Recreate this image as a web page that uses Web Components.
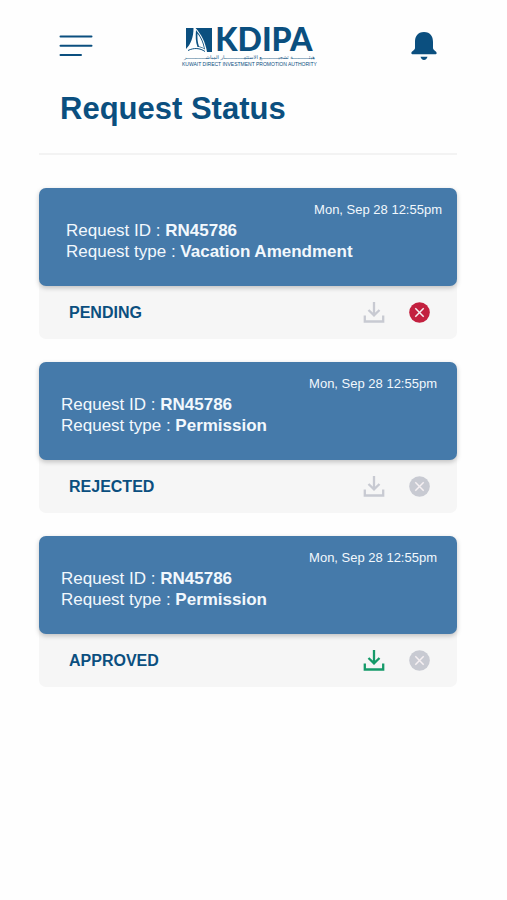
<!DOCTYPE html>
<html lang="en">
<head>
<meta charset="UTF-8">
<meta name="viewport" content="width=device-width, initial-scale=1.0">
<title>Request Status</title>
<style>
  body {
    margin: 0;
    background: #fefefe;
    color: #0b4f7f;
    font-family: "Liberation Sans", Arial, sans-serif;
  }
</style>
</head>
<body>
<request-page heading="Request Status">
  <app-header slot="header">
    <kdipa-logo></kdipa-logo>
  </app-header>
  <request-card class="inset" request-id="RN45786" type="Vacation Amendment" date="Mon, Sep 28 12:55pm" status="PENDING"></request-card>
  <request-card request-id="RN45786" type="Permission" date="Mon, Sep 28 12:55pm" status="REJECTED"></request-card>
  <request-card request-id="RN45786" type="Permission" date="Mon, Sep 28 12:55pm" status="APPROVED"></request-card>
</request-page>

<script>
class KdipaLogo extends HTMLElement {
  constructor() {
    super();
    this.attachShadow({ mode: 'open' });
  }

  connectedCallback() {
    this.shadowRoot.innerHTML = `
      <style>
        :host {
          display: grid;
          justify-items: center;
          width: 132px;
          white-space: nowrap;
        }
        .brand {
          display: flex;
          align-items: flex-start;
          gap: 3px;
          height: 26px;
        }
        svg {
          display: block;
        }
        .name {
          font: 900 32px/22px Lato, "Open Sans", sans-serif;
        }
        .arabic {
          font: 5px/7px "DejaVu Sans", sans-serif;
        }
        .english {
          font: 5px/6px "Liberation Sans", Arial, sans-serif;
        }
      </style>
      <div class="brand">
        <svg width="26" height="24" viewBox="0 0 26 24" aria-hidden="true">
          <path d="M0 0H26V24H0Z" fill="currentColor"/>
          <path d="M7.500 0H9.500C15 6 19.500 14 21 24H0V21C5 16 7.500 9 7.500 0Z" fill="#fefefe"/>
          <path d="M10 2C15 8 18 14 19 21.500C16 19.500 13 19 11.500 19C9.500 14 9.500 8 10 2Z" fill="currentColor"/>
          <path d="M11.500 5.500C15 10 17 15 18 20.500C16 19 14 18.500 13 18.500C11.500 14 11.200 10 11.500 5.500Z" fill="#fefefe"/>
          <path d="M2 22.500C8 19.500 14 20 19 23.500" fill="none" stroke="currentColor" stroke-width="1"/>
        </svg>
        <span class="name">KDIPA</span>
      </div>
      <span class="arabic" lang="ar" dir="rtl">هيئـــــــــــة تشجيـــــــــــع الاستثمـــــــــــــار المباشـــــــــــــر</span>
      <span class="english">KUWAIT DIRECT INVESTMENT PROMOTION AUTHORITY</span>
    `;
  }
}

class AppHeader extends HTMLElement {
  constructor() {
    super();
    this.attachShadow({ mode: 'open' });
  }

  connectedCallback() {
    this.shadowRoot.innerHTML = `
      <style>
        :host {
          display: block;
        }
        header {
          display: grid;
          grid-template-columns: 1fr auto 1fr;
          align-items: center;
          padding: 28px 20px 0;
        }
        button {
          padding: 0;
          border: 0;
          background: none;
          color: inherit;
          cursor: pointer;
        }
        .bell {
          justify-self: end;
        }
        .menu {
          justify-self: start;
        }
        svg {
          display: block;
        }
      </style>
      <header>
        <button class="menu" type="button" aria-label="Menu">
          <svg width="34" height="28" viewBox="0 0 34 28">
            <path d="M1.500 2.500H32.500M1.500 11.800H32.500M1.500 21H22" fill="none" stroke="currentColor" stroke-width="2" stroke-linecap="round"/>
          </svg>
        </button>
        <slot></slot>
        <button class="bell" type="button" aria-label="Notifications">
          <svg width="26" height="32" viewBox="0 0 26 32">
            <path d="M13 0C6.500 0 4 4.500 4 10V16C4 18 .3 19.500 .3 21C.3 22 1 22.200 2 22.200H24C25 22.200 25.700 22 25.700 21C25.700 19.500 22 18 22 16V10C22 4.500 19.500 0 13 0Z" fill="currentColor"/>
            <path d="M9.500 24.800H16.500C16 26.800 14.800 28 13 28S10 26.800 9.500 24.800Z" fill="currentColor"/>
          </svg>
        </button>
      </header>
    `;
  }
}

class RequestCard extends HTMLElement {
  constructor() {
    super();
    this.attachShadow({ mode: 'open' });
  }

  connectedCallback() {
    const id = this.getAttribute('request-id');
    const type = this.getAttribute('type');
    const date = this.getAttribute('date');
    const status = this.getAttribute('status');

    this.shadowRoot.innerHTML = `
      <style>
        :host {
          display: block;
          border-radius: 7px;
          background: #f6f6f6;
        }
        .details {
          display: grid;
          gap: 2px;
          padding: 14px var(--card-end, 20px) 24px var(--card-start, 22px);
          border-radius: 7px;
          background: #457aaa;
          box-shadow: 0 2px 5px rgba(0, 0, 0, 0.22);
          color: #f2f8fd;
        }
        time {
          justify-self: end;
          font-size: 13px;
          line-height: 16px;
        }
        p {
          margin: 0;
          font-size: 17px;
          line-height: 21px;
        }
        .footer {
          display: flex;
          align-items: center;
          gap: 24px;
          height: 53px;
          padding: 0 27px 0 30px;
        }
        .status {
          flex: 1;
          font-size: 16px;
          font-weight: bold;
        }
        button {
          padding: 0;
          border: 0;
          background: none;
          color: #c8cad2;
        }
        button:enabled {
          cursor: pointer;
        }
        .download:enabled {
          color: #159a69;
        }
        .cancel:enabled {
          color: #c3203f;
        }
        svg {
          display: block;
        }
      </style>
      <div class="details">
        <time>${date}</time>
        <div>
          <p>Request ID : <b>${id}</b></p>
          <p>Request type : <b>${type}</b></p>
        </div>
      </div>
      <div class="footer">
        <span class="status">${status}</span>
        <button class="download" type="button" aria-label="Download" ${status === 'APPROVED' ? '' : 'disabled'}>
          <svg width="22" height="22" viewBox="0 0 22 22" fill="none" stroke="currentColor" stroke-width="2.300">
            <path d="M11 0V13M5.500 8L11 13.300L16.500 8M1.800 13.500V19.500H20.200V13.500"/>
          </svg>
        </button>
        <button class="cancel" type="button" aria-label="Cancel request" ${status === 'PENDING' ? '' : 'disabled'}>
          <svg width="21" height="21" viewBox="0 0 21 21">
            <circle cx="10.500" cy="10.500" r="10.300" fill="currentColor"/>
            <path d="M6.300 6.300L14.700 14.700M14.700 6.300L6.300 14.700" stroke="#f6f0f3" stroke-width="1.500"/>
          </svg>
        </button>
      </div>
    `;
  }
}

class RequestPage extends HTMLElement {
  constructor() {
    super();
    this.attachShadow({ mode: 'open' });
  }

  connectedCallback() {
    this.shadowRoot.innerHTML = `
      <style>
        :host {
          display: block;
          padding: 0 50px 40px 39px;
        }
        h1 {
          margin: 0;
          padding: 24px 21px 26px;
          border-bottom: 2px solid #f3f3f3;
          font-size: 31px;
          line-height: 36px;
        }
        main {
          display: grid;
          gap: 23px;
          padding-top: 33px;
        }
        ::slotted(.inset) {
          --card-start: 27px;
          --card-end: 15px;
        }
      </style>
      <slot name="header"></slot>
      <h1>${this.getAttribute('heading')}</h1>
      <main><slot></slot></main>
    `;
  }
}

customElements.define('kdipa-logo', KdipaLogo);
customElements.define('app-header', AppHeader);
customElements.define('request-card', RequestCard);
customElements.define('request-page', RequestPage);
</script>
</body>
</html>
